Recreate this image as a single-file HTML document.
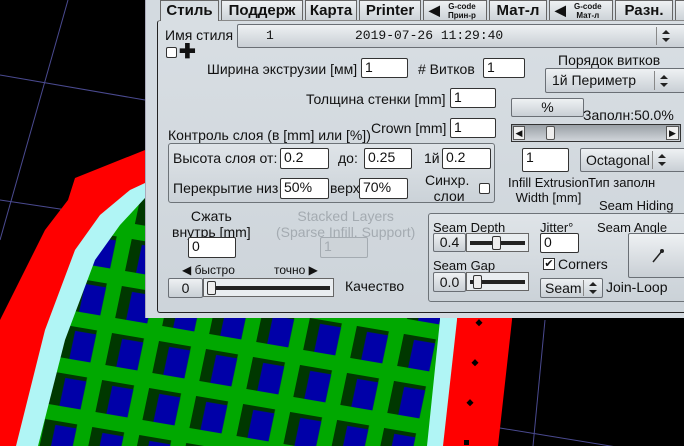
<!DOCTYPE html>
<html><head><meta charset="utf-8"><style>
*{box-sizing:border-box;margin:0;padding:0}
body{width:684px;height:446px;overflow:hidden;background:#000;position:relative;font-family:"Liberation Sans",Arial,sans-serif;font-size:14px;color:#111}
.a{position:absolute;white-space:nowrap;line-height:15px}
.in{position:absolute;background:#fff;border:1px solid #333;border-radius:2px;font-size:14px;line-height:17px;padding-left:3px}
.bt{position:absolute;background:linear-gradient(#eef1f3,#c9cfd5);border:1px solid #6a6f75;border-radius:2px;text-align:center;font-size:14px}
.tab{position:absolute;top:0;height:20px;background:linear-gradient(#eef1f3,#cdd3d8);border:1px solid #666;border-bottom:none;font-weight:bold;font-size:15px;line-height:19px;text-align:center}
.gc{font-weight:bold;font-size:8px;line-height:9px}
.sl{position:absolute;height:19px;background:#e9edf0;border:1px solid #666}
.sl i{position:absolute;left:3px;right:3px;top:7px;height:4px;border-top:2px solid #222;border-bottom:2px solid #222}
.sl b{position:absolute;top:2px;width:9px;height:14px;background:#eee;border:1px solid #333;border-radius:2px}
.grp{position:absolute;border:1px solid #6d7378;border-radius:3px;background:linear-gradient(#dfe4e8,#cbd2d8)}
.sp{position:absolute;top:2px;bottom:2px;border-left:1px solid #888;width:16px}
.sp:before{content:"";position:absolute;left:5px;top:calc(50% - 6px);border:4px solid transparent;border-bottom:4px solid #222;border-top:none}
.sp:after{content:"";position:absolute;left:5px;top:calc(50% + 2px);border:4px solid transparent;border-top:4px solid #222;border-bottom:none}
</style></head><body>
<svg width="684" height="446" style="position:absolute;left:0;top:0">
<defs>
<pattern id="p" patternUnits="userSpaceOnUse" width="47" height="47" patternTransform="matrix(1,0.17,-0.21,1,65,325)">
<rect width="47" height="47" fill="#00a800"/>
<rect x="0" y="0" width="32" height="32" fill="#003800"/>
<rect x="11" y="4" width="21" height="28" fill="#0000a8"/>
</pattern>
</defs>
<g stroke="#4a4a90" stroke-width="1">
<line x1="68" y1="0" x2="0" y2="240"/><line x1="0" y1="75" x2="145" y2="100"/><line x1="0" y1="200" x2="80" y2="212"/>
<line x1="545" y1="320" x2="533" y2="446"/><line x1="500" y1="428" x2="684" y2="458"/>
</g>
<polygon fill="#ff0000" points="0,446 0,320 25,270 45,230 68,200 75,178 145,150 520,150 512,320 498,446"/>
<polygon fill="#b0f5f5" points="16,446 45,330 75,250 100,215 130,190 145,183 460,183 457,320 443,446"/>
<polygon fill="url(#p)" points="38,446 65,340 95,260 120,225 145,198 440,198 440,320 427,446"/>
<g fill="#000"><rect x="477" y="320" width="5" height="5" transform="rotate(45 479 322)"/><rect x="473" y="360" width="5" height="5" transform="rotate(45 475 362)"/><rect x="468" y="400" width="5" height="5" transform="rotate(45 470 402)"/><rect x="464" y="440" width="5" height="5"/></g>
</svg>

<div style="position:absolute;left:145px;top:0;width:539px;height:318px;background:#d3dae0;border-left:1px solid #aab"></div>
<div style="position:absolute;left:157px;top:20px;width:540px;height:293px;border:1px solid #222;border-top-color:#888;border-radius:3px;background:linear-gradient(#d8dee3,#cdd4da)"></div>

<div class="tab" style="left:160px;width:59px;background:#d8dee3;height:21px">Стиль</div>
<div class="tab" style="left:221px;width:82px">Поддерж</div>
<div class="tab" style="left:305px;width:52px">Карта</div>
<div class="tab" style="left:359px;width:62px">Printer</div>
<div class="tab" style="left:423px;width:64px"><span style="position:absolute;left:5px;top:0;font-size:14px">◀</span><div class="gc" style="position:absolute;left:24px;top:1px">G-code<br>Прин-р</div></div>
<div class="tab" style="left:489px;width:58px">Мат-л</div>
<div class="tab" style="left:549px;width:64px"><span style="position:absolute;left:5px;top:0;font-size:14px">◀</span><div class="gc" style="position:absolute;left:24px;top:1px">G-code<br>Мат-л</div></div>
<div class="tab" style="left:615px;width:58px">Разн.</div>
<div class="tab" style="left:675px;width:20px"></div>

<div class="a" style="left:165px;top:28px">Имя стиля</div>
<div class="bt" style="left:237px;top:24px;width:460px;height:24px;text-align:left;font-family:'Liberation Mono',monospace;font-size:13px;line-height:22px"><span style="position:absolute;left:28px">1</span><span style="position:absolute;left:117px">2019-07-26 11:29:40</span><span class="sp" style="left:418px"></span></div>
<div style="position:absolute;left:166px;top:47px;width:11px;height:11px;background:#fff;border:1px solid #333;border-radius:2px"></div>
<div class="a" style="left:179px;top:42px;font-size:20px;font-weight:bold;line-height:20px">✚</div>

<div class="a" style="left:207px;top:62px">Ширина экструзии [мм]</div>
<div class="in" style="left:361px;top:58px;width:47px;height:20px">1</div>
<div class="a" style="left:418px;top:62px"># Витков</div>
<div class="in" style="left:483px;top:58px;width:42px;height:20px">1</div>
<div class="a" style="left:558px;top:53px">Порядок витков</div>
<div class="bt" style="left:545px;top:68px;width:145px;height:25px;text-align:left;line-height:23px;padding-left:6px">1й Периметр<span class="sp" style="left:108px"></span></div>

<div class="a" style="left:306px;top:92px">Толщина стенки [mm]</div>
<div class="in" style="left:450px;top:88px;width:46px;height:20px">1</div>
<div class="bt" style="left:511px;top:98px;width:73px;height:19px;line-height:17px">%</div>
<div class="a" style="left:583px;top:108px;font-size:14px">Заполн:50.0%</div>
<div class="a" style="left:371px;top:121px">Crown [mm]</div>
<div class="in" style="left:450px;top:118px;width:46px;height:20px">1</div>
<div class="a" style="left:168px;top:128px">Контроль слоя (в [mm] или [%])</div>
<div style="position:absolute;left:511px;top:124px;width:170px;height:18px;border:1px solid #333;background:linear-gradient(#9aa0a6,#d0d5da)"><span style="position:absolute;left:1px;top:1px;width:12px;height:14px;background:#eee;border:1px solid #555;font-size:9px;line-height:12px;text-align:center">◀</span><span style="position:absolute;left:34px;top:1px;width:9px;height:14px;background:#eee;border:1px solid #555;border-radius:2px"></span><span style="position:absolute;left:154px;top:1px;width:13px;height:14px;background:#eee;border:1px solid #555;font-size:9px;line-height:12px;text-align:center">▶</span></div>

<div class="grp" style="left:168px;top:143px;width:327px;height:60px"></div>
<div class="a" style="left:173px;top:151px">Высота слоя от:</div>
<div class="in" style="left:280px;top:148px;width:49px;height:21px">0.2</div>
<div class="a" style="left:338px;top:151px">до:</div>
<div class="in" style="left:364px;top:148px;width:48px;height:21px">0.25</div>
<div class="a" style="left:424px;top:151px">1й</div>
<div class="in" style="left:442px;top:148px;width:49px;height:21px">0.2</div>
<div class="a" style="left:173px;top:181px">Перекрытие низ</div>
<div class="in" style="left:280px;top:178px;width:49px;height:21px">50%</div>
<div class="a" style="left:330px;top:181px">верх</div>
<div class="in" style="left:359px;top:178px;width:49px;height:21px">70%</div>
<div class="a" style="left:425px;top:172px;text-align:center;line-height:16px">Синхр.<br>&nbsp;слои</div>
<div style="position:absolute;left:479px;top:183px;width:11px;height:11px;background:#fff;border:1px solid #333;border-radius:2px"></div>

<div class="in" style="left:522px;top:148px;width:47px;height:24px">1</div>
<div class="bt" style="left:580px;top:148px;width:110px;height:24px;text-align:left;line-height:22px;padding-left:5px">Octagonal<span class="sp" style="left:71px"></span></div>
<div class="a" style="left:508px;top:175px;text-align:center;font-size:13px">Infill Extrusion<br>Width [mm]</div>
<div class="a" style="left:588px;top:175px;font-size:13px">Тип заполн</div>
<div class="a" style="left:599px;top:198px;font-size:13px">Seam Hiding</div>

<div class="a" style="left:172px;top:208px;text-align:center;line-height:16px">Сжать<br>внутрь [mm]</div>
<div class="in" style="left:188px;top:237px;width:48px;height:21px">0</div>
<div class="a" style="left:276px;top:208px;text-align:center;line-height:16px;color:#a4abb1">Stacked Layers<br>(Sparse Infill, Support)</div>
<div class="in" style="left:320px;top:237px;width:48px;height:21px;background:#cdd3d8;border-color:#a4abb1;color:#a4abb1">1</div>
<div class="a" style="left:182px;top:263px;font-size:12px">◀ быстро</div>
<div class="a" style="left:274px;top:263px;font-size:12px">точно ▶</div>
<div class="bt" style="left:168px;top:278px;width:35px;height:20px;line-height:18px">0</div>
<div class="sl" style="left:203px;top:278px;width:131px"><i></i><b style="left:3px"></b></div>
<div class="a" style="left:345px;top:279px;font-size:14px">Качество</div>

<div class="grp" style="left:428px;top:213px;width:270px;height:89px"></div>
<div class="a" style="left:433px;top:220px;font-size:13px">Seam Depth</div>
<div class="bt" style="left:433px;top:233px;width:33px;height:19px;line-height:17px">0.4</div>
<div class="sl" style="left:466px;top:233px;width:63px"><i></i><b style="left:25px"></b></div>
<div class="a" style="left:540px;top:220px;font-size:13px">Jitter°</div>
<div class="in" style="left:540px;top:233px;width:39px;height:20px">0</div>
<div class="a" style="left:597px;top:220px;font-size:13px">Seam Angle</div>
<div class="bt" style="left:628px;top:233px;width:65px;height:45px"><svg width="20" height="20" style="position:absolute;left:20px;top:12px"><path d="M4 16 L13 5" stroke="#222" stroke-width="1.5"/><circle cx="13" cy="5" r="2" fill="#222"/></svg></div>
<div class="a" style="left:433px;top:258px;font-size:13px">Seam Gap</div>
<div class="bt" style="left:433px;top:272px;width:33px;height:20px;line-height:18px">0.0</div>
<div class="sl" style="left:466px;top:272px;width:63px"><i></i><b style="left:6px"></b></div>
<div style="position:absolute;left:543px;top:258px;width:12px;height:12px;background:#fff;border:1px solid #333;font-size:11px;line-height:10px;text-align:center">✔</div>
<div class="a" style="left:558px;top:257px;font-size:14px">Corners</div>
<div class="bt" style="left:540px;top:278px;width:63px;height:20px;text-align:left;line-height:18px;padding-left:4px">Seam<span class="sp" style="left:42px;top:1px;bottom:1px"></span></div>
<div class="a" style="left:606px;top:280px;font-size:14px">Join-Loop</div>
</body></html>
